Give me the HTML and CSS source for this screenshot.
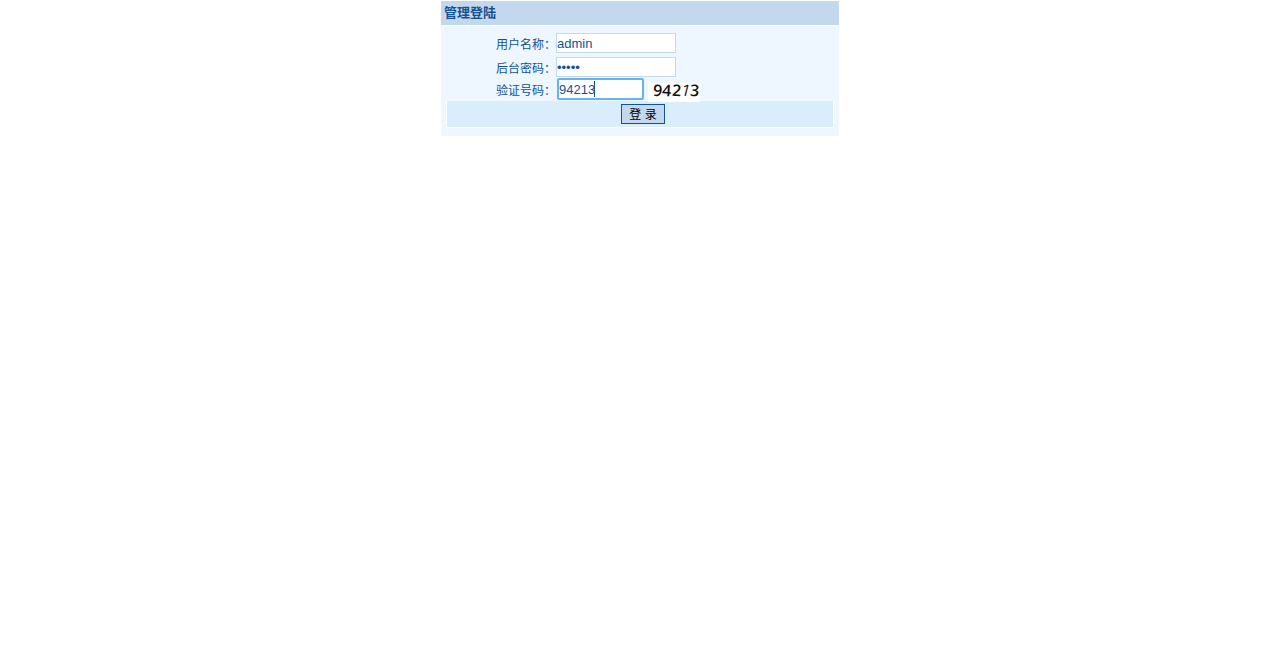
FILE: index.html
```html
<!DOCTYPE html>
<html lang="zh-CN">
<head>
<meta charset="utf-8">
<title>管理登陆</title>
<link rel="stylesheet" href="styles.css">
</head>
<body>
<main class="panel">
  <h1 class="panel-title">管理登陆</h1>
  <form class="login">
    <div class="row">
      <label class="label" for="user">用户名称：</label>
      <input class="field" id="user" type="text" value="admin">
    </div>
    <div class="row">
      <label class="label" for="pass">后台密码：</label>
      <input class="field" id="pass" type="password" value="admin">
    </div>
    <div class="row row-code">
      <label class="label" for="code">验证号码：</label>
      <span class="code-box">
        <input class="field field-code" id="code" type="text" value="94213">
        <span class="caret"></span>
      </span>
      <span class="captcha"><i>9</i><i>4</i><i>2</i><i class="lean">1</i><i>3</i></span>
    </div>
    <div class="actions">
      <button class="submit" type="button">登 录</button>
    </div>
  </form>
</main>
</body>
</html>
```
FILE: styles.css
```css
* {
  box-sizing: border-box;
}

body {
  margin: 0;
  padding-top: 1px;
  background: #fff;
  color: #135294;
  font: 12px/20px "Liberation Sans", "Noto Sans CJK SC", sans-serif;
}

.panel {
  max-width: 398px;
  margin: 0 auto;
}

.panel-title {
  margin: 0 0 1px;
  padding: 2px 3px;
  background: #c4d8ed;
  font-size: 13px;
  line-height: 20px;
}

.login {
  padding: 7px 5px 8px;
  background: #eef7ff;
}

.row {
  display: flex;
  align-items: center;
  height: 24px;
  padding-bottom: 4px;
}

.label {
  width: 110px;
  padding-top: 3px;
  text-align: right;
  white-space: nowrap;
}

.field {
  width: 120px;
  height: 20px;
  padding: 0;
  border: 1px solid #c4d8ed;
  background: #fff;
  color: #135294;
  font: 13px/18px "Liberation Sans", sans-serif;
}

.row-code {
  height: 20px;
  padding: 0;
  align-items: flex-start;
  margin-top: -3px;
  margin-bottom: 3px;
}

.code-box {
  position: relative;
  display: flex;
  margin-left: 1px;
}

.field-code {
  width: 87px;
  height: 22px;
  border: 2px solid #62b5ef;
  border-radius: 2px;
  outline: none;
}

.caret {
  position: absolute;
  left: 37px;
  top: 3px;
  width: 1px;
  height: 16px;
  background: #135294;
}

.captcha {
  position: relative;
  z-index: 1;
  display: flex;
  justify-content: flex-end;
  width: 52px;
  height: 19px;
  margin: 5px 0 0 4px;
  padding-right: 1px;
  background: #fff;
  color: #111;
  font: 600 16px/15px "Open Sans", sans-serif;
}

.captcha i {
  font-style: normal;
  transform: rotate(4deg);
}

.captcha .lean {
  font-weight: 400;
  transform: rotate(14deg);
}

.actions {
  display: flex;
  justify-content: center;
  padding: 3px 0 3px 6px;
  border: 1px solid #fff;
  border-top: 0;
  background: #d9edfa;
}

.submit {
  width: 44px;
  height: 20px;
  padding: 1px 0 0;
  border: 1px solid #135294;
  background: #c4d8ed;
  color: #000;
  font: 12px/18px "Liberation Sans", "Noto Sans CJK SC", sans-serif;
  white-space: nowrap;
}
```
